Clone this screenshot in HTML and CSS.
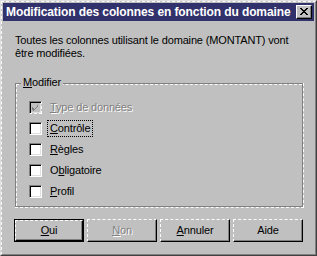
FILE: index.html
```html
<!DOCTYPE html>
<html lang="fr">
<head>
    <meta charset="UTF-8">
    <title>Modification des colonnes en fonction du domaine</title>
    <link rel="stylesheet" href="styles.css">
</head>
<body>
    <div class="window">
        <div class="frame">
            <div class="titlebar">
                <span class="title">Modification des colonnes en fonction du domaine</span>
                <span class="close">
                    <svg width="8" height="7" viewBox="0 0 8 7">
                        <path d="M0 0h2v1h-2zM6 0h2v1h-2zM1 1h2v1h-2zM5 1h2v1h-2zM2 2h4v1h-4zM3 3h2v1h-2zM2 4h4v1h-4zM1 5h2v1h-2zM5 5h2v1h-2zM0 6h2v1h-2zM6 6h2v1h-2z" fill="#000"/>
                    </svg>
                </span>
            </div>
            <div class="content">
                <p class="message">Toutes les colonnes utilisant le domaine (MONTANT) vont<br>être modifiées.</p>

                <div class="group">
                    <span class="legend"><u>M</u>odifier</span>
                    <div class="group-box">
                        <div class="group-inner">
                            <div class="row disabled">
                                <span class="check checked">
                                    <svg width="7" height="7" viewBox="0 0 7 7">
                                        <path d="M6 0v3h-1v1h-1v1h-1v1h-1v1h-1v-1h-1v-3h1v1h1v1h1v-1h1v-1h1v-1z" fill="#808080"/>
                                    </svg>
                                </span>
                                <span class="label"><u>T</u>ype de données</span>
                            </div>
                            <div class="row">
                                <span class="check"></span>
                                <span class="label focus"><u>C</u>ontrôle</span>
                            </div>
                            <div class="row">
                                <span class="check"></span>
                                <span class="label"><u>R</u>ègles</span>
                            </div>
                            <div class="row">
                                <span class="check"></span>
                                <span class="label">O<u>b</u>ligatoire</span>
                            </div>
                            <div class="row">
                                <span class="check"></span>
                                <span class="label"><u>P</u>rofil</span>
                            </div>
                        </div>
                    </div>
                </div>

                <div class="buttons">
                    <div class="btn default"><span class="btn-face"><u>O</u>ui</span></div>
                    <div class="btn disabled"><span class="btn-face"><u>N</u>on</span></div>
                    <div class="btn"><span class="btn-face"><u>A</u>nnuler</span></div>
                    <div class="btn"><span class="btn-face">Aide</span></div>
                </div>
            </div>
        </div>
    </div>
</body>
</html>
```

FILE: styles.css
```css
body {
    margin: 0;
    background-color: #c0c0c0;
    font-family: "Liberation Sans", Arial, sans-serif;
    font-size: 11px;
    letter-spacing: -0.15px;
    line-height: 13px;
    color: #000;
}
u {
    text-decoration: underline;
    text-underline-offset: 1px;
}

/* window frame */
.window {
    width: 317px;
    height: 256px;
    box-sizing: border-box;
    border-top: 1px solid #dfdfdf;
    border-left: 1px solid #dfdfdf;
    border-right: 1px solid #404040;
    border-bottom: 1px solid #404040;
}
.frame {
    height: 100%;
    box-sizing: border-box;
    border-top: 1px dashed #fff;
    border-left: 1px dashed #fff;
    border-right: 1px solid #808080;
    border-bottom: 1px solid #808080;
    padding: 1px;
}
.titlebar {
    height: 18px;
    background-color: #31316b;
    display: flex;
    align-items: center;
    justify-content: space-between;
    padding: 0 2px 0 3px;
}
.title {
    font-weight: bold;
    font-size: 12px;
    letter-spacing: -0.1px;
    color: #fff;
    white-space: nowrap;
}
.close {
    flex: none;
    width: 16px;
    height: 14px;
    box-sizing: border-box;
    background-color: #c0c0c0;
    border-top: 1px solid #fff;
    border-left: 1px solid #fff;
    border-right: 1px solid #000;
    border-bottom: 1px solid #000;
    box-shadow: inset -1px -1px 0 #808080;
    display: flex;
    align-items: center;
    justify-content: center;
    padding: 0 1px 1px 0;
}
.close svg {
    display: block;
}

/* content */
.content {
    padding: 13px 10px 0 11px;
}
.message {
    margin: 0 0 0 1px;
}

/* group box */
.group {
    position: relative;
    margin: 23px 0 0 1px;
    border-right: 1px dashed #fff;
    border-bottom: 1px dashed #fff;
}
.group-box {
    border: 1px solid #808080;
}
.group-inner {
    border-top: 1px dashed #fff;
    border-left: 1px dashed #fff;
    padding: 12px 12px 4px 12px;
}
.legend {
    position: absolute;
    top: -7px;
    left: 6px;
    padding: 0 2px;
    background-color: #c0c0c0;
}
.row {
    height: 21px;
    display: flex;
    align-items: center;
}
.check {
    width: 13px;
    height: 13px;
    box-sizing: border-box;
    background-color: #fff;
    border-top: 1px solid #808080;
    border-left: 1px solid #808080;
    border-right: 1px dashed #fff;
    border-bottom: 1px dashed #fff;
    box-shadow: inset 1px 1px 0 #000, inset -1px -1px 0 #dfdfdf;
    display: flex;
    align-items: center;
    justify-content: center;
    margin-right: 5px;
}
.row.disabled .check {
    background-color: #c0c0c0;
}
.check svg {
    display: block;
}
.label {
    padding: 1px 2px;
    border: 1px dotted transparent;
}
.label.focus {
    border-color: #000;
}
.row.disabled .label,
.btn.disabled .btn-face {
    color: #808080;
    text-shadow: 1px 1px 0 #fff;
}

/* buttons */
.buttons {
    display: flex;
    gap: 3px;
    margin-top: 11px;
}
.btn {
    width: 70px;
    height: 23px;
    box-sizing: border-box;
    display: flex;
}
.btn.default {
    border: 1px solid #000;
}
.btn-face {
    flex: 1;
    box-sizing: border-box;
    border-top: 1px dashed #fff;
    border-left: 1px dashed #fff;
    border-right: 1px solid #000;
    border-bottom: 1px solid #000;
    box-shadow: inset -1px -1px 0 #808080;
    display: flex;
    align-items: center;
    justify-content: center;
    padding-bottom: 1px;
}
```
